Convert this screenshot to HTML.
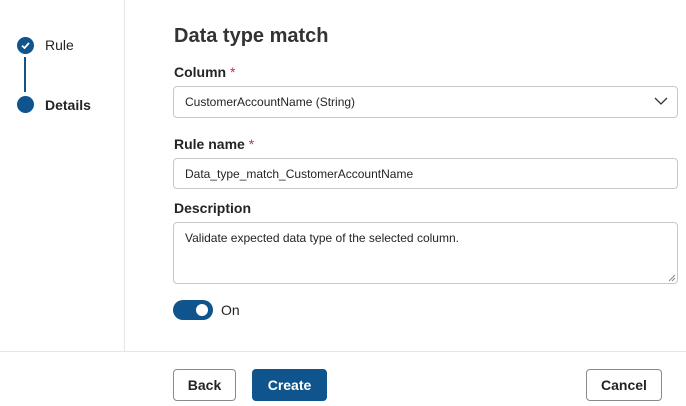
<!DOCTYPE html>
<html><head><meta charset="utf-8"><style>
*{box-sizing:border-box;margin:0;padding:0}
body{width:686px;height:406px;background:#fff;font-family:"Liberation Sans",sans-serif;color:#242424;position:relative;overflow:hidden}
.a{position:absolute}
.lbl{font-size:14px;font-weight:bold;left:174px}
.req{color:#c4314b;font-weight:normal}
.box{left:173px;width:505px;border:1px solid #c8c8c8;border-radius:4px;font-size:12px;padding-left:11px;line-height:30px}
.btn{top:369px;height:32px;border:1px solid #8a8a8a;border-radius:4px;font-size:14px;font-weight:bold;text-align:center;line-height:30px;background:#fff}
</style></head><body>
<div class="a" style="left:124px;top:0;width:1px;height:351px;background:#e6e6e6"></div>
<div class="a" style="left:0;top:351px;width:686px;height:1px;background:#e6e6e6"></div>
<div class="a" style="left:17px;top:37px;width:17px;height:17px;border-radius:50%;background:#0f548c"></div>
<svg class="a" style="left:17px;top:37px" width="17" height="17"><path d="M5 8.7 L7.5 11 L12 6" stroke="#fff" stroke-width="1.8" fill="none"/></svg>
<div class="a" style="left:24px;top:57px;width:2px;height:35px;background:#0f548c"></div>
<div class="a" style="left:17px;top:96px;width:17px;height:17px;border-radius:50%;background:#0f548c"></div>
<div class="a" style="left:45px;top:37px;font-size:14px">Rule</div>
<div class="a" style="left:45px;top:97px;font-size:14px;font-weight:bold">Details</div>
<div class="a" style="left:174px;top:25px;font-size:20px;font-weight:bold;color:#333">Data type match</div>
<div class="a lbl" style="top:64px">Column <span class="req">*</span></div>
<div class="a box" style="top:86px;height:32px">CustomerAccountName (String)</div>
<svg class="a" style="left:654px;top:96px" width="14" height="10"><path d="M1 2 L7 8 L13 2" stroke="#333" stroke-width="1.3" fill="none"/></svg>
<div class="a lbl" style="top:136px">Rule name <span class="req">*</span></div>
<div class="a box" style="top:158px;height:31px">Data_type_match_CustomerAccountName</div>
<div class="a lbl" style="top:200px">Description</div>
<div class="a box" style="top:222px;height:62px;line-height:30px">Validate expected data type of the selected column.</div>
<svg class="a" style="left:668px;top:274px" width="8" height="8"><path d="M1 7 L7 1 M4 7 L7 4" stroke="#888" stroke-width="1"/></svg>
<div class="a" style="left:173px;top:300px;width:40px;height:20px;border-radius:10px;background:#0f548c"></div>
<div class="a" style="left:196px;top:304px;width:12px;height:12px;border-radius:50%;background:#fff"></div>
<div class="a" style="left:221px;top:302px;font-size:14px">On</div>
<div class="a btn" style="left:173px;width:63px">Back</div>
<div class="a btn" style="left:252px;width:75px;background:#0f548c;border-color:#0f548c;color:#fff">Create</div>
<div class="a btn" style="left:586px;width:76px">Cancel</div>
</body></html>
